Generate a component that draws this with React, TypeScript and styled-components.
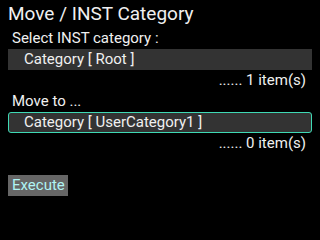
import styled, { createGlobalStyle } from "styled-components";

const GlobalStyle = createGlobalStyle`
  html, body {
    margin: 0;
    padding: 0;
    background: #000;
  }
  body {
    width: 320px;
    height: 240px;
    overflow: hidden;
    font-family: Roboto, "Liberation Sans", sans-serif;
    color: #f0f0f0;
  }
`;

const Screen = styled.div`
  width: 320px;
  height: 240px;
  box-sizing: border-box;
  padding: 0 8px;
  display: flex;
  flex-direction: column;
`;

const Title = styled.div`
  font-size: 19px;
  line-height: 27px;
  height: 28px;
  white-space: nowrap;
`;

const Label = styled.div`
  font-size: 15px;
  line-height: 21px;
  height: 21px;
  padding-left: 4px;
`;

const Field = styled.div<{ $selected?: boolean }>`
  box-sizing: border-box;
  height: 21px;
  font-size: 15px;
  line-height: ${(p) => (p.$selected ? "19px" : "21px")};
  background: #333;
  padding-left: ${(p) => (p.$selected ? "15px" : "16px")};
  border: ${(p) => (p.$selected ? "1px solid #3fd9b4" : "none")};
  border-radius: ${(p) => (p.$selected ? "3px" : "0")};
  white-space: nowrap;
`;

const Count = styled.div`
  font-size: 15px;
  line-height: 21px;
  height: 21px;
  text-align: right;
  padding-right: 6px;
`;

const Actions = styled.div`
  margin-top: 21px;
  display: flex;
`;

const Button = styled.button`
  height: 21px;
  width: 60px;
  padding: 0 0 0 4px;
  margin: 0;
  border: none;
  border-radius: 0;
  background: #666;
  color: #b0f4f4;
  font-family: Roboto, "Liberation Sans", sans-serif;
  font-size: 15px;
  line-height: 21px;
  text-align: left;
`;

export default function App() {
  return (
    <>
      <GlobalStyle />
      <Screen>
        <Title>Move / INST Category</Title>
        <Label>Select INST category :</Label>
        <Field>Category [ Root ]</Field>
        <Count>...... 1 item(s)</Count>
        <Label>Move to ...</Label>
        <Field $selected>Category [ UserCategory1 ]</Field>
        <Count>...... 0 item(s)</Count>
        <Actions>
          <Button>Execute</Button>
        </Actions>
      </Screen>
    </>
  );
}
